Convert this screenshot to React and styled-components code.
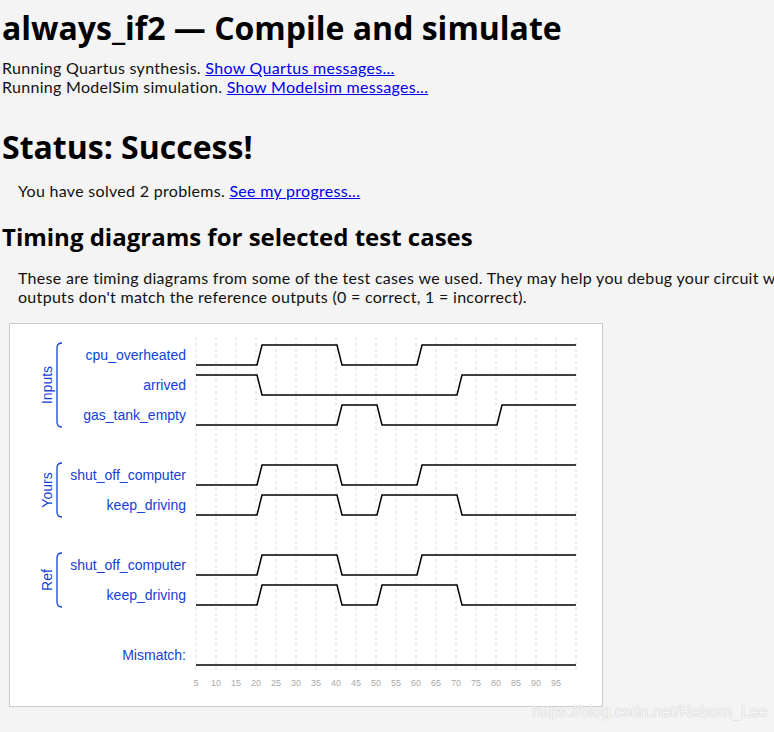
import React from 'react';
import styled, { createGlobalStyle } from 'styled-components';

const GlobalStyle = createGlobalStyle`
  html, body {
    margin: 0;
    padding: 0;
    background: #f4f4f4;
    overflow-x: hidden;
  }
  body {
    font-family: Lato, "Open Sans", sans-serif;
    color: #111;
  }
`;

const Page = styled.div`
  position: relative;
  padding: 8px 0 0 2px;
  min-height: 728px;
  box-sizing: border-box;
`;

const Title = styled.h1`
  font-family: "Open Sans", sans-serif;
  font-weight: 700;
  font-size: 32px;
  line-height: 40px;
  margin: ${(p) => p.$margin || '0'};
  color: #000;
`;

const SubTitle = styled.h2`
  font-family: "Open Sans", sans-serif;
  font-weight: 700;
  font-size: 24px;
  line-height: 30px;
  margin: ${(p) => p.$margin || '0'};
  color: #000;
`;

const Line = styled.div`
  font-size: 16px;
  line-height: 19px;
  letter-spacing: 0.3px;
  white-space: nowrap;
  padding-left: ${(p) => (p.$indent ? '16px' : '0')};
`;

const Link = styled.a`
  color: #0000ee;
  text-decoration: underline;
  cursor: pointer;
`;

const Block = styled.div`
  margin: ${(p) => p.$margin || '0'};
`;

const Chart = styled.div`
  width: 592px;
  height: 382px;
  margin: 0 0 0 7px;
  background: #fff;
  border: 1px solid #ccc;
`;

const Watermark = styled.div`
  position: absolute;
  left: 532px;
  top: 703px;
  font-family: "Liberation Sans", Arial, sans-serif;
  font-size: 16px;
  color: #f7f7f7;
  text-shadow: 0 0 1px #c8c8c8, 0 0 1px #c8c8c8;
  white-space: nowrap;
`;

const BLUE = '#1440d8';
const tx = (t) => 176 + 4 * t;

// signal: initial level + list of toggle times
const wave = (hi, lo, start, toggles) => {
  let level = start;
  let d = `M196,${level ? hi : lo}`;
  toggles.forEach((t) => {
    const a = tx(t) + 1;
    const b = a + 5;
    d += ` L${a},${level ? hi : lo}`;
    level = !level;
    d += ` L${b},${level ? hi : lo}`;
  });
  d += ` L576,${level ? hi : lo}`;
  return d;
};

const rows = [
  { name: 'cpu_overheated', hi: 345, start: 0, t: [20, 40, 60] },
  { name: 'arrived', hi: 375, start: 1, t: [20, 70] },
  { name: 'gas_tank_empty', hi: 405, start: 0, t: [40, 50, 80] },
  { name: 'shut_off_computer', hi: 465, start: 0, t: [20, 40, 60] },
  { name: 'keep_driving', hi: 495, start: 0, t: [20, 40, 50, 70] },
  { name: 'shut_off_computer', hi: 555, start: 0, t: [20, 40, 60] },
  { name: 'keep_driving', hi: 585, start: 0, t: [20, 40, 50, 70] },
  { name: 'Mismatch:', hi: 645, start: 0, t: [] },
];

const groups = [
  { name: 'Inputs', top: 343, bottom: 427 },
  { name: 'Yours', top: 463, bottom: 517 },
  { name: 'Ref', top: 553, bottom: 607 },
];

const grid = Array.from({ length: 20 }, (_, i) => 196 + i * 20);
const ticks = Array.from({ length: 19 }, (_, i) => 5 + i * 5);

const TimingDiagram = () => (
  <svg width="592" height="382" viewBox="10 324 592 382" style={{ display: 'block' }}>
    {grid.map((x) => (
      <line key={x} x1={x} x2={x} y1={337} y2={672} stroke="#d9d9d9" strokeDasharray="3,3" />
    ))}
    {ticks.map((t) => (
      <text key={t} x={tx(t)} y={686} fontSize="9" fill="#aaa" textAnchor="middle" fontFamily="Liberation Sans, Arial, sans-serif">
        {t}
      </text>
    ))}
    {groups.map((g) => (
      <g key={g.name}>
        <path
          d={`M62,${g.top} Q57,${g.top} 57,${g.top + 5} L57,${g.bottom - 5} Q57,${g.bottom} 62,${g.bottom}`}
          fill="none"
          stroke={BLUE}
          strokeWidth="1.3"
        />
        <text
          transform={`translate(52,${(g.top + g.bottom) / 2}) rotate(-90)`}
          textAnchor="middle"
          fontSize="14"
          fill={BLUE}
          fontFamily="Liberation Sans, Arial, sans-serif"
        >
          {g.name}
        </text>
      </g>
    ))}
    {rows.map((r, i) => (
      <g key={i}>
        <text x={186} y={r.hi + 15} textAnchor="end" fontSize="14" fill={BLUE} fontFamily="Liberation Sans, Arial, sans-serif">
          {r.name}
        </text>
        <path d={wave(r.hi, r.hi + 20, r.start, r.t)} fill="none" stroke="#000" strokeWidth="1.5" />
      </g>
    ))}
  </svg>
);

export default function App() {
  return (
    <Page>
      <GlobalStyle />
      <Title $margin="0 0 10px">always_if2 — Compile and simulate</Title>
      <Line>
        Running Quartus synthesis. <Link>Show Quartus messages...</Link>
      </Line>
      <Line>
        Running ModelSim simulation. <Link>Show Modelsim messages...</Link>
      </Line>
      <Title $margin="31px 0 0">Status: Success!</Title>
      <Block $margin="14px 0 0">
        <Line $indent>
          You have solved 2 problems. <Link>See my progress...</Link>
        </Line>
      </Block>
      <SubTitle $margin="22px 0 0">Timing diagrams for selected test cases</SubTitle>
      <Block $margin="16px 0 17px">
        <Line $indent>
          These are timing diagrams from some of the test cases we used. They may help you debug your circuit when your
        </Line>
        <Line $indent>outputs don't match the reference outputs (0 = correct, 1 = incorrect).</Line>
      </Block>
      <Chart>
        <TimingDiagram />
      </Chart>
      <Watermark>https://blog.csdn.net/Reborn_Lee</Watermark>
    </Page>
  );
}
